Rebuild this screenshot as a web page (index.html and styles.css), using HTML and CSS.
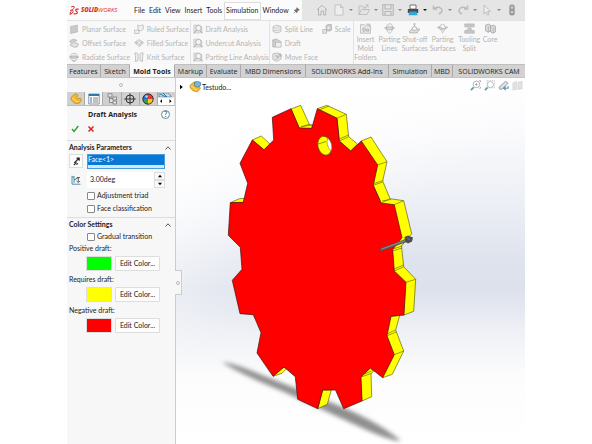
FILE: index.html
```html
<!DOCTYPE html>
<html lang="en">
<head>
<meta charset="utf-8">
<title>SOLIDWORKS - Draft Analysis</title>
<link rel="stylesheet" href="styles.css">
</head>
<body>
<svg class="defs" aria-hidden="true">
  <symbol id="i-cube" viewBox="0 0 10 10"><path d="M1.500 2.500 8.500 1V8L1.500 9.500Z" fill="#c9c9c9" stroke="#aaa" stroke-width=".5"/></symbol>
  <symbol id="i-offset" viewBox="0 0 10 10"><path d="M.5 3.500Q4-.5 8 2.500L6 3.500Q4 2.500 2.500 5Z" fill="#d0d0d0" stroke="#aaa" stroke-width=".6"/><path d="M1 7Q4 3 9.500 6L8 9Q4 10 1 7Z" fill="#e2e2e2" stroke="#aaa" stroke-width=".7"/></symbol>
  <symbol id="i-radiate" viewBox="0 0 10 10"><circle cx="5" cy="5" r="3.700" fill="#f2f2f2" stroke="#b5b5b5" stroke-width=".7"/><path d="M.3 5Q5 2.500 9.700 5Q5 8 .3 5ZM3 8.500 5 9.700 7 8.500" fill="#cfcfcf" stroke="#aaa" stroke-width=".6"/></symbol>
  <symbol id="i-ruled" viewBox="0 0 10 10"><path d="M3.500 1Q6 3 9 .8L9.500 5Q7 8 4.500 6.500ZM.5 6H5V9.500H.5Z" fill="#f0f0f0" stroke="#b5b5b5" stroke-width=".7"/></symbol>
  <symbol id="i-filled" viewBox="0 0 10 10"><path d="M.5 4.500 5 1.500 9.500 4.500 5.500 8.800Z" fill="#c8c8c8" stroke="#bbb" stroke-width=".6"/><path d="M3 3 7.500 6.500M7 3 3 6.700M5 2V8" stroke="#f5f5f5" stroke-width=".7"/></symbol>
  <symbol id="i-knit" viewBox="0 0 10 10"><path d="M.8 1Q3 .2 4 2V8.500L1.500 9.500V4ZM9.200 1Q7 .2 6 2V8.500L8.500 9.500V4Z" fill="#f0f0f0" stroke="#b0b0b0" stroke-width=".7"/></symbol>
  <symbol id="i-analysis" viewBox="0 0 10 10"><path d="M.8 1H6L9 3V9H.8Z" fill="#e2e2e2" stroke="#c2c2c2" stroke-width=".6"/><circle cx="5.500" cy="4" r="2.700" fill="#f5f5f5" stroke="#a9a9a9" stroke-width=".8"/><path d="M3.500 6 .8 9.300M7 7 9.500 9" stroke="#a9a9a9"/></symbol>
  <symbol id="i-split" viewBox="0 0 10 10"><path d="M1 2.500Q5-.5 9 2.500V7.500Q5 10.500 1 7.500Z" fill="#ededed" stroke="#b5b5b5" stroke-width=".7"/><path d="M1 3Q4 5.500 5 4T9 3M1 6Q5 8 9 5" fill="none" stroke="#b5b5b5" stroke-width=".6"/></symbol>
  <symbol id="i-draft" viewBox="0 0 10 10"><path d="M.7 2 4 .8 9 3.500V9H.7Z" fill="#cfcfcf" stroke="#aaa" stroke-width=".6"/><path d="M3.500 4.500H9V9H3.500Z" fill="#eee" stroke="#b5b5b5" stroke-width=".5"/><path d="M.7 2 3.500 4.500V9" fill="none" stroke="#aaa" stroke-width=".5"/></symbol>
  <symbol id="i-move" viewBox="0 0 10 10"><path d="M.8 2 5 1 9 2V7L5 9.300.8 7.500Z" fill="#e4e4e4" stroke="#b0b0b0" stroke-width=".7"/><path d="M3 4H6V6.500M3.500 7.500 8.500 3M6.500 2.700H9V5" fill="none" stroke="#a8a8a8" stroke-width=".8"/></symbol>
  <symbol id="i-scale" viewBox="0 0 10 10"><path d="M4 1.500 6 .5H9.500V6L8 7H4Z" fill="#c9c9c9" stroke="#aaa" stroke-width=".6"/><path d="M.7 5.500H4.500V9.300H.7Z" fill="#e3e3e3" stroke="#aaa" stroke-width=".6"/><circle cx="6.500" cy="3.700" r="1.300" fill="#eee"/></symbol>
  <symbol id="i-folder" viewBox="0 0 10 10"><path d="M.5 1.500H4L5 2.700H9.500V9.300H.5Z" fill="#ececec" stroke="#b5b5b5" stroke-width=".7"/><path d="M5.500 1H9V3.500M2.500 5 4 4 5 5V7L3.500 8 2.500 7ZM6 5.500H8V7.500H6Z" fill="#d4d4d4" stroke="#aaa" stroke-width=".6"/></symbol>
  <symbol id="i-parting" viewBox="0 0 10 10"><path d="M2 4Q2.500 1 5 .7T8 4ZM2.200 5.500Q3 8.500 5 9.500 7.500 8 8 5.500Z" fill="#f2f2f2" stroke="#b5b5b5" stroke-width=".7"/><path d="M.5 4.500 5 3.500 9.500 4.500 5 6.500Z" fill="#ddd" stroke="#aaa" stroke-width=".7"/></symbol>
  <symbol id="i-shut" viewBox="0 0 10 10"><path d="M.3 7.500 3 5.500H9.700L7.500 9H.7Z" fill="#e0e0e0" stroke="#aaa" stroke-width=".7"/><path d="M2.500 6Q3 3 5 3T7.500 6Q5 8 2.500 6Z" fill="#eee" stroke="#aaa" stroke-width=".7"/><path d="M5 .3V3M4 1.200 5 .3 6 1.200" fill="none" stroke="#aaa" stroke-width=".7"/></symbol>
  <symbol id="i-psurf" viewBox="0 0 10 10"><path d="M.3 4 5 2.500 9.700 4 5 7Z" fill="#c9c9c9" stroke="#aaa" stroke-width=".6"/><path d="M2.500 3.500Q3 1 5 1T7.500 3.500 5 5ZM4 6.500 5 9.300 7 6" fill="#f2f2f2" stroke="#b5b5b5" stroke-width=".6"/></symbol>
  <symbol id="i-tooling" viewBox="0 0 10 10"><path d="M.7.8H9.300V3.500H7.500Q5 4.500 2.500 3.500H.7ZM.7 9.300H9.300V6.800H7.500L6.500 5H3.500L2.500 6.800H.7Z" fill="#c5c5c5" stroke="#b3b3b3" stroke-width=".6"/></symbol>
  <symbol id="i-core" viewBox="0 0 10 10"><path d="M.5 2 3 1 5 2V7L3 8.500.5 7ZM5 3 7.500 2 9.500 3V8L7.500 9.300 5 8Z" fill="#ddd" stroke="#a9a9a9" stroke-width=".8"/><path d="M3 3V8M7.500 4V9" stroke="#aaa" stroke-width=".7"/></symbol>
  <symbol id="i-part" viewBox="0 0 12 12"><path d="M1 4.500 4 1.500 6.500 .8 8 2.500 6.500 4.500 7.500 6 10.500 5 11.300 7.500 8.500 10.800 4 9.800 1.300 7Z" fill="#f4b92d" stroke="#b98213" stroke-width=".7"/><path d="M2 5 4.500 6.500 6 8.500 8.500 8.800" fill="none" stroke="#ffe18a" stroke-width=".9"/></symbol>
</svg>

<main class="app">
  <header class="titlebar">
    <div class="brand">
      <svg class="brand-mark" viewBox="0 0 10 11"><g fill="none" stroke="#dd2b2b" stroke-linecap="round" stroke-linejoin="round"><path d="M2.500 1.800Q6.500.5 5 3.200 4 4.500 2.800 5" stroke-width="1"/><path d="M1.500 5.200Q4.500 4.500 4.300 6.300 3.700 8.700.8 9.300L2 6.500" stroke-width="1"/><path d="M9.300 4.200Q6.300 4 6.700 5.300L8.300 7.200Q8.500 9 5 8.800" stroke-width="1.200"/></g></svg>
      <span class="brand-name"><b>SOLID</b>WORKS</span>
    </div>
    <nav class="menus">
      <button>File</button><button>Edit</button><button>View</button><button>Insert</button><button>Tools</button><button class="boxed">Simulation</button><button>Window</button>
      <button class="pin" aria-label="Pin"><svg viewBox="0 0 8 8"><path d="M4.500.8 7.200 3.500 6 3.800 4.700 5.300 4.500 6.500 1.500 3.500 2.800 3.300 4.300 1.900ZM3 5 1 7.200" fill="#777" stroke="#555" stroke-width=".7"/></svg></button>
    </nav>
    <div class="quick">
      <button aria-label="Home"><svg viewBox="0 0 12 12"><path d="M1 6 6 1.200 11 6M2.500 5V11H5V7H7.500V11H9.700V5" fill="none" stroke="#b5b5b5"/></svg></button>
      <button class="drop" aria-label="New"><svg viewBox="0 0 12 12"><path d="M2 .8H7.500L10 3.500V11.200H2ZM7.500.8V3.500H10" fill="#eee" stroke="#bbb" stroke-width=".8"/></svg></button>
      <button class="drop" aria-label="Open"><svg viewBox="0 0 12 12"><path d="M1 10.500V2H4.500L5.500 3.500H8M1 10.500 3.500 5.500H11.500L9 10.500ZM6 5 10 1M7.500 1H10V3.500" fill="#e4e4e4" stroke="#bbb" stroke-width=".9"/></svg></button>
      <button class="drop" aria-label="Save"><svg viewBox="0 0 12 12"><path d="M.8.8H11.200V11.200H.8ZM3 1V5H9V1M3 11V7.500H9V11" fill="none" stroke="#b5b5b5" stroke-width="1.100"/></svg></button>
      <button class="drop live" aria-label="Print"><svg viewBox="0 0 12 12"><path d="M3 1H9V5H3Z" fill="#fff" stroke="#555" stroke-width=".8"/><path d="M.8 5H11.200V9H.8Z" fill="#474b50"/><path d="M2.500 7.500H9.500L10.500 11.200H1.500Z" fill="#35a6d8"/></svg></button>
      <button class="drop" aria-label="Undo"><svg viewBox="0 0 12 12"><path d="M1.500 1.500V5H5M2 4.700Q6 2 9 4.500T7 10" fill="none" stroke="#bbb" stroke-width="1.500"/></svg></button>
      <button class="drop" aria-label="Redo"><svg viewBox="0 0 12 12"><path d="M10.500 1.500V5H7M10 4.700Q6 2 3 4.500T5 10" fill="none" stroke="#bbb" stroke-width="1.500"/></svg></button>
      <button class="drop" aria-label="Select"><svg viewBox="0 0 12 12"><path d="M3 1 9.500 7.500H6.700L8 10.500 6.700 11.200 5.200 8 3 10Z" fill="#eee" stroke="#b5b5b5" stroke-width=".8"/></svg></button>
      <button aria-label="Rebuild"><svg viewBox="0 0 12 12"><rect x="3.300" y=".5" width="5.400" height="11" rx="2.500" fill="#999"/><circle cx="6" cy="3.500" r="1.300" fill="#ccc"/><circle cx="6" cy="8" r="1.300" fill="#ccc"/></svg></button>
    </div>
  </header>

  <section class="ribbon" aria-label="Mold tools commands">
    <div class="group three">
      <button><svg><use href="#i-cube"/></svg>Planar Surface</button>
      <button><svg><use href="#i-offset"/></svg>Offset Surface</button>
      <button><svg><use href="#i-radiate"/></svg>Radiate Surface</button>
    </div>
    <div class="group three">
      <button><svg><use href="#i-ruled"/></svg>Ruled Surface</button>
      <button><svg><use href="#i-filled"/></svg>Filled Surface</button>
      <button><svg><use href="#i-knit"/></svg>Knit Surface</button>
    </div>
    <div class="group three ruled">
      <button><svg><use href="#i-analysis"/></svg>Draft Analysis</button>
      <button><svg><use href="#i-analysis"/></svg>Undercut Analysis</button>
      <button><svg><use href="#i-analysis"/></svg>Parting Line Analysis</button>
    </div>
    <div class="group three ruled">
      <button><svg><use href="#i-split"/></svg>Split Line</button>
      <button><svg><use href="#i-draft"/></svg>Draft</button>
      <button><svg><use href="#i-move"/></svg>Move Face</button>
    </div>
    <div class="group three">
      <button><svg><use href="#i-scale"/></svg>Scale</button>
    </div>
    <div class="group large ruled">
      <button><svg><use href="#i-folder"/></svg>Insert<br>Mold<br>Folders</button>
      <button><svg><use href="#i-parting"/></svg>Parting<br>Lines</button>
      <button><svg><use href="#i-shut"/></svg>Shut-off<br>Surfaces</button>
      <button><svg><use href="#i-psurf"/></svg>Parting<br>Surfaces</button>
      <button><svg><use href="#i-tooling"/></svg>Tooling<br>Split</button>
      <button><svg><use href="#i-core"/></svg>Core</button>
    </div>
  </section>

  <nav class="tabs">
    <button>Features</button><button>Sketch</button><button class="current">Mold Tools</button><button>Markup</button><button>Evaluate</button><button>MBD Dimensions</button><button>SOLIDWORKS Add-Ins</button><button>Simulation</button><button>MBD</button><button class="last">SOLIDWORKS CAM</button>
  </nav>

  <div class="workspace">
    <aside class="panel">
      <div class="grip"><i></i></div>
      <div class="panel-tabs">
        <button aria-label="Feature tree"><svg><use href="#i-part"/></svg></button>
        <button class="current" aria-label="Properties"><svg viewBox="0 0 12 12"><path d="M.8 1H11.200V11H.8Z" fill="#fff" stroke="#5d6b78" stroke-width=".7"/><path d="M.8 1H11.200V3H.8Z" fill="#2d78ac"/><path d="M2 5H4M2 7H4M2 9H4" stroke="#2d78ac"/><path d="M5 5H10M5 7H10M5 9H10" stroke="#777" stroke-width=".9"/></svg></button>
        <button aria-label="Configurations"><svg viewBox="0 0 12 12"><path d="M2 .8H6V4H2ZM7 4H10.500V7H7ZM7 8H10.500V11H7ZM3.500 4V9.500H7M3.500 5.500H7" fill="#e5e5e5" stroke="#777" stroke-width=".8"/></svg></button>
        <button aria-label="Dimensions"><svg viewBox="0 0 12 12"><circle cx="6" cy="6" r="4" fill="none" stroke="#333"/><path d="M6 .3V11.700M.3 6H11.700" stroke="#333"/></svg></button>
        <button aria-label="Appearance"><svg viewBox="0 0 12 12"><circle cx="6" cy="6" r="5.300" fill="#2868cc"/><path d="M6 6V.7A5.300 5.300 0 0 1 11.300 6Z" fill="#e13c2f"/><path d="M6 6H11.300A5.300 5.300 0 0 1 6 11.300Z" fill="#f3c927"/><path d="M6 6V11.300A5.300 5.300 0 0 1 .7 6Z" fill="#36a046"/><circle cx="6" cy="6" r="5.200" fill="none" stroke="#222" stroke-width=".8"/><circle cx="4.500" cy="3.500" r="1.300" fill="#fff" opacity=".7"/></svg></button>
        <button class="scroller" aria-label="More tabs"><svg viewBox="0 0 16 12"><path d="M1 0H10L13 3V4H1Z" fill="#c9dce8" stroke="#54738a" stroke-width=".7"/><path d="M2 1 8 4M5 0 9 4" stroke="#287dad"/><path d="M0 4.500H16V12H0Z" fill="#fff"/><path d="M4 6.300V10L2 8.200ZM11.500 6.300V10L13.500 8.200Z" fill="#000"/></svg></button>
      </div>
      <div class="heading">
        <h1>Draft Analysis</h1>
        <button class="help" aria-label="Help">?</button>
      </div>
      <div class="confirm">
        <button aria-label="OK"><svg viewBox="0 0 8 8"><path d="M1 4 3 6.500 7.300 1" fill="none" stroke="#2c9c2c" stroke-width="1.300"/></svg></button>
        <button aria-label="Cancel"><svg viewBox="0 0 8 8"><path d="M1.500 1.500 6.500 6.500M6.500 1.500 1.500 6.500" fill="none" stroke="#e02020" stroke-width="1.500"/></svg></button>
      </div>

      <section class="block">
        <h2>Analysis Parameters<svg viewBox="0 0 6 6"><path d="M.5 4.500 3 1.800 5.500 4.500" fill="none" stroke="#444" stroke-width=".9"/></svg></h2>
        <div class="param">
          <button class="reverse" aria-label="Reverse direction"><svg viewBox="0 0 10 10"><path d="M2.500 6.500 7.500 1.700M5 1.300H8V4.300M2 9 5 6M5 8.500 6.500 7" fill="none" stroke="#222" stroke-width="1.300"/></svg></button>
          <div class="selection"><span class="picked">Face&lt;1&gt;</span></div>
        </div>
        <div class="param">
          <svg class="angle-icon" viewBox="0 0 10 10"><path d="M1 .8V9.200H9.500M3 1V8M1 2H3" fill="none" stroke="#3e86b0" stroke-width=".9"/><path d="M3 5 7.500 2.500M7.300 2V7M5.500 6 7.300 7.500 9 6M5.800 2.500H9" fill="none" stroke="#444" stroke-width=".8"/></svg>
          <div class="spin">
            <input type="text" value="3.00deg" aria-label="Draft angle">
            <div class="steps">
              <button aria-label="Increase"><svg viewBox="0 0 6 4"><path d="M1 3.200 3 .8 5 3.200Z"/></svg></button>
              <button aria-label="Decrease"><svg viewBox="0 0 6 4"><path d="M1 .8 3 3.200 5 .8Z"/></svg></button>
            </div>
          </div>
        </div>
        <label class="check"><input type="checkbox">Adjustment triad</label>
        <label class="check"><input type="checkbox">Face classification</label>
      </section>

      <section class="block colors">
        <h2>Color Settings<svg viewBox="0 0 6 6"><path d="M.5 4.500 3 1.800 5.500 4.500" fill="none" stroke="#444" stroke-width=".9"/></svg></h2>
        <label class="check"><input type="checkbox">Gradual transition</label>
        <p>Positive draft:</p>
        <div class="color"><span class="swatch positive"></span><button>Edit Color...</button></div>
        <p>Requires draft:</p>
        <div class="color"><span class="swatch requires"></span><button>Edit Color...</button></div>
        <p>Negative draft:</p>
        <div class="color"><span class="swatch negative"></span><button>Edit Color...</button></div>
      </section>
      <button class="handle" aria-label="Collapse panel"><i></i></button>
    </aside>

    <section class="viewport" aria-label="Model view">
      <svg class="model" viewBox="176 78 349 366" preserveAspectRatio="xMidYMin slice" role="img" aria-label="Part with draft analysis colours">
        <defs>
          <linearGradient id="sky" gradientUnits="userSpaceOnUse" x1="0" y1="77" x2="0" y2="444">
            <stop offset="0" stop-color="#fff"/><stop offset=".14" stop-color="#fbfbfd"/><stop offset=".34" stop-color="#eceff5"/><stop offset=".5" stop-color="#dfe3ed"/><stop offset=".58" stop-color="#dde1ec"/><stop offset=".69" stop-color="#eef0f5"/><stop offset=".81" stop-color="#fcfcfd"/><stop offset="1" stop-color="#fff"/>
          </linearGradient>
          <linearGradient id="glow" gradientUnits="userSpaceOnUse" x1="200" y1="160" x2="290" y2="290">
            <stop offset="0" stop-color="#fff" stop-opacity=".95"/><stop offset="1" stop-color="#fff" stop-opacity="0"/>
          </linearGradient>
          <filter id="soft" x="-20%" y="-20%" width="140%" height="140%"><feGaussianBlur stdDeviation="1.900"/></filter>
        </defs>
        <rect x="176" y="77" width="349" height="367" fill="url(#sky)"/>
        <rect x="176" y="77" width="349" height="367" fill="url(#glow)"/>
        <path d="M222 362Q234 363 262 375L330 402Q378 421 401 441Q390 441 360 427L282 391Q238 373 222 362Z" fill="#8f8f8f" filter="url(#soft)"/>
        <g fill="#ff0" stroke="#4b4b10" stroke-width=".6" stroke-linejoin="round">
          <path d="M291 109 300.700 105.300 309.500 124.700 312.500 125 311.700 128.500H299.300Z"/>
          <path d="M317.300 108.700 326.700 105.300 346.300 114.300 348.700 136.700 357.500 144 350.700 151 339.300 141 337 118.300Z"/>
          <path d="M361.300 141 371 137 387 161.700 382.700 181 390 198.700 403.700 200.700 411.700 233.700 401.500 246 403.700 266.700 415.700 279.300 413.700 311.300 404 315 380 310V200L373 185Z"/>
          <path d="M391 316.300 399.700 315.300 395.700 330 403.700 351 392.300 374.300 382.700 377.700 380 340Z"/>
          <path d="M370.300 368 373.500 371 371 374 371.700 396.700 362 401 360 377Z"/>
          <path d="M322.700 390H331.300L327.300 404.300 317.700 408.700Z"/>
          <path d="M273 376.300 284 367 286 369.300 282 373.300Z"/>
          <path d="M252.300 140 261.300 136 270 144 264 150Z"/>
          <path d="M230.300 202.700 239.300 198.700 244.500 198.300 243.300 203Z"/>
        </g>
        <path d="M272.300 117.300 291 108.700 299.300 128 311.700 128.300 317.300 108.700 337 118.300 339.300 141 350.700 151 361.300 141 377.700 165 373.300 185.300 381 203 394.300 204.700 402 237.700 392.700 249.500 394.300 271 406 282.300 404 315 391 316.300 387 335.700 394.300 354.700 382.700 377.700 370.300 368 361 377 362 401 343.700 408.700 335.500 390H322.700L317.700 408.700 297.700 399.300 295.300 376.700 284 367 273 376.300 257 353 261 332.700 253.300 314.700 240 313.700 232.300 280.300 242 269.300 240.300 247.300 228.300 235.300 230.300 202.700 243.300 202.300 247.700 183.300 240 163.300 252.300 140 264 149.700 273.700 140Z" fill="#f00" stroke="#4a1010" stroke-width=".7" stroke-linejoin="round"/>
        <path d="M299.300 128 309.500 124M301 126.500 312 125M337 118.300 346.300 114.300M339.300 141 348.700 136.700M339.300 139 348.500 135M320 109.500 329 106M377.700 165 387 161.700M373.300 185.300 382.700 182M374 183.500 383 180.500M381 203 390 198.700M382 201 391 199.500M394.300 204.700 403.700 200.700M392.700 251 402 248M393 249 402 246M394.300 271 403.700 266.700M394 269 403.500 265M406 282.300 415.700 279.300M387 335.700 396.500 332M388 333.500 395.700 330M394.300 354.700 403.700 351M361 377 371 373.500M362 375 371.500 371" stroke="#5b5b12" stroke-width=".6" fill="none"/>
        <g transform="rotate(-14 324.700 145.700)">
          <ellipse cx="324.700" cy="145.700" rx="6.800" ry="9.700" fill="#ff0" stroke="#4b4b10" stroke-width=".7"/>
          <path d="M329.500 138.900Q333.800 146 329.500 152.500 325.500 145 329.500 138.900Z" fill="#fff" stroke="#77772a" stroke-width=".5"/>
          <path d="M318 142.500 327 142" stroke="#5b5b12" stroke-width=".6"/>
        </g>
        <path d="M381.500 249.500 406 240.500" stroke="#555" stroke-width="3.200" stroke-linecap="round"/>
        <path d="M382 249 405 240.700" stroke="#8a8a8a" stroke-width="1.300" stroke-linecap="round"/>
        <path d="M404.500 237 408 235.500 413 237.500 412 241.500 408 243.500 405 241.500Z" fill="#4c4c4c"/>
        <path d="M407 237.500 410 240" stroke="#888" stroke-width=".8"/>
      </svg>
      <div class="tree">
        <button class="arrow" aria-label="Expand tree"><svg viewBox="0 0 6 6"><path d="M2 .8 4.800 3 2 5.200Z"/></svg></button>
        <svg class="part" viewBox="0 0 12 12"><use href="#i-part"/><path d="M5.500 1.500 8.500.3 11.500 1.500V4.500L8.500 6.200 5.500 4.700Z" fill="#70b9df" stroke="#2b7196" stroke-width=".6"/></svg>
        <span>Testudo...</span>
      </div>
      <div class="view-tools">
        <button aria-label="Zoom to fit"><svg viewBox="0 0 12 12"><path d="M1 11 4 8" stroke="#5b9cc0" stroke-width="2"/><circle cx="7" cy="4.800" r="3.600" fill="#fff" stroke="#aaa"/><path d="M5.500 4.800H8.500M7 3.300V6.300M10 .8H11.500V2.300M10 9H11.500V7.500" fill="none" stroke="#888" stroke-width=".7"/></svg></button>
        <button aria-label="Zoom to area"><svg viewBox="0 0 12 12"><path d="M1 11 4 8" stroke="#5b9cc0" stroke-width="2"/><circle cx="7" cy="5" r="3.300" fill="#fff" stroke="#bbb"/><path d="M3.500.8H11.300V8.500H3.500Z" fill="none" stroke="#aaa" stroke-width=".7" stroke-dasharray="1.500 1"/></svg></button>
        <button aria-label="Previous view"><svg viewBox="0 0 12 12"><path d="M1 8 8 1.500 11 3.500 4.500 10Q1 11 1 8Z" fill="#ddd" stroke="#888" stroke-width=".8"/><path d="M11 6.500V9H7M8.500 7 6 9 8.500 11" fill="none" stroke="#5b9cc0" stroke-width="1.300"/></svg></button>
        <button aria-label="Section view"><svg viewBox="0 0 12 12"><path d="M1 3 5 1.500V10L1 11.200ZM6.500 2.500 11 1.500V9.500L6.500 10.500Z" fill="#e2e2e2" stroke="#d5d5d5" stroke-width=".8"/></svg></button>
      </div>
    </section>
  </div>
</main>
</body>
</html>
```

FILE: styles.css
```css
* {
  box-sizing: border-box;
}

body {
  margin: 0;
  padding: 0 67px;
  background: #fff;
  color: #222;
  font: 7px/9px Lato, "Open Sans", sans-serif;
}

button {
  margin: 0;
  padding: 0;
  border: 0;
  background: none;
  color: inherit;
  font: inherit;
}

h1,
h2,
p {
  margin: 0;
  font-size: 7px;
}

svg {
  display: block;
  flex: none;
}

.defs {
  display: none;
}

.app {
  display: flex;
  flex-direction: column;
  min-height: 100vh;
}

/* Title bar */

.titlebar {
  display: flex;
  height: 21px;
  background: #fbfbfb;
  border-bottom: 1px solid #e2e2e2;
}

.brand {
  display: flex;
  align-items: center;
  gap: 2px;
  padding-left: 2px;
  width: 65px;
  color: #dd2b2b;
}

.brand-mark {
  width: 10px;
  height: 11px;
}

.brand-name {
  font-family: "Open Sans", sans-serif;
  font-size: 6px;
  font-style: italic;
}

.brand-name b {
  font-weight: 800;
}

.menus {
  display: flex;
  flex: none;
  align-items: center;
  gap: 4px;
  padding: 1px 4px 0 2px;
  width: 170px;
}

.menus .boxed {
  height: 18px;
  margin: 0 -2px;
  padding: 0 1px;
  border: 1px solid #ddd;
  background: #fff;
}

.pin {
  margin-left: auto;
}

.pin svg {
  width: 7px;
  height: 7px;
}

.quick {
  display: flex;
  flex: 1;
  align-items: center;
  justify-content: space-between;
  padding: 0 7px 0 14px;
  background: #e5e5e5;
}

.quick button {
  display: flex;
  align-items: center;
  gap: 4px;
}

.quick svg {
  width: 12px;
  height: 12px;
}

.drop::after {
  content: "";
  border: 2px solid transparent;
  border-top-color: #888;
  border-bottom: 0;
}

.live::after {
  border-top-color: #111;
}

/* Command ribbon */

.ribbon {
  display: grid;
  grid-template-columns: 65fr 58fr 78fr 51fr 33fr 173fr;
  height: 43px;
  background: #f8f8f8;
  color: #b4b4b4;
}

.group {
  padding: 1px 0 0 2px;
}

.ruled {
  border-left: 1px solid #e2e2e2;
}

.three button {
  display: flex;
  align-items: center;
  gap: 3px;
  height: 14px;
  white-space: nowrap;
}

.ribbon svg {
  width: 10px;
  height: 10px;
}

.large {
  display: grid;
  grid-template-columns: 24fr 24fr 27fr 29fr 24fr 18fr 26fr;
  align-items: start;
  padding: 2px 0 0;
}

.large button {
  display: block;
}

.large svg {
  width: 11px;
  height: 11px;
  margin: 0 auto 1px;
}

/* Command tabs */

.tabs {
  display: grid;
  grid-template-columns: 34fr 29fr 45fr 32fr 34fr 65fr 83fr 43fr 21fr 72fr;
  height: 14px;
  border-bottom: 1px solid #c4c4c4;
  background: #d2d2d2;
  font-family: "Open Sans", sans-serif;
}

.tabs button {
  border-top: 1px solid #c0c0c0;
  border-right: 1px solid #aaa;
  white-space: nowrap;
}

.tabs .current {
  border-top-color: #fafafa;
  background: #fafafa;
  font-weight: 700;
}

.tabs .last {
  border-right: 0;
}

/* Property panel */

.workspace {
  display: flex;
  flex: 1;
}

.panel {
  position: relative;
  flex: none;
  width: 109px;
  border-right: 1px solid #ccc;
  background: #f7f7f7;
}

.grip {
  display: flex;
  align-items: center;
  justify-content: center;
  height: 14px;
}

.grip i,
.handle i {
  width: 4px;
  height: 4px;
  border: 1px solid #bbb;
  border-radius: 50%;
}

.panel-tabs {
  display: grid;
  grid-template-columns: repeat(5, 18fr) 17fr;
  height: 14px;
  border-bottom: 1px solid #bbb;
  background: #d0d0d0;
}

.panel-tabs button {
  display: flex;
  align-items: center;
  justify-content: center;
  border-right: 1px solid #aaa;
}

.panel-tabs .current {
  background: #f7f7f7;
}

.panel-tabs .scroller {
  border: 0;
}

.panel-tabs svg {
  width: 12px;
  height: 12px;
}

.panel-tabs .scroller svg {
  width: 16px;
}

.heading {
  display: flex;
  align-items: center;
  justify-content: space-between;
  height: 17px;
  padding: 0 5px 0 21px;
}

.heading h1 {
  font-family: "Open Sans", sans-serif;
  font-weight: 700;
}

.help {
  width: 9px;
  height: 9px;
  border: 1px solid #68869a;
  border-radius: 50%;
  background: #fff;
  color: #2477aa;
  font-weight: 700;
  line-height: 7px;
}

.confirm {
  display: flex;
  align-items: flex-start;
  gap: 8px;
  height: 17px;
  padding: 2px 4px 0;
}

.confirm svg {
  width: 8px;
  height: 8px;
}

.block {
  height: 77px;
  padding: 1px 2px 0;
  border-top: 1px solid #ddd;
}

.colors {
  height: auto;
}

.block h2 {
  display: flex;
  align-items: center;
  justify-content: space-between;
  height: 11px;
  padding-right: 2px;
  font-weight: 700;
}

.block h2 svg {
  width: 6px;
  height: 6px;
}

.param {
  display: flex;
  align-items: flex-start;
  gap: 4px;
  height: 18px;
  padding: 1px 8px 0 0;
}

.reverse {
  display: grid;
  place-items: center;
  width: 14px;
  height: 14px;
  border: 1px solid #ddd;
  background: #fcfcfc;
}

.reverse svg {
  width: 9px;
  height: 9px;
}

.selection {
  flex: 1;
  height: 15px;
  border: 1px solid #4a9ddb;
  background: #cfe8fb;
}

.picked {
  display: block;
  height: 10px;
  background: #0878d7;
  color: #fff;
}

.angle-icon {
  width: 10px;
  height: 10px;
  margin: 3px 2px 0;
}

.spin {
  display: flex;
  flex: 1;
  min-width: 0;
  height: 16px;
  background: #fff;
}

.spin input {
  flex: 1;
  width: 0;
  min-width: 0;
  padding: 0 3px 2px;
  border: 0;
  background: none;
  color: inherit;
  font: inherit;
}

.steps {
  display: grid;
  flex: none;
  width: 11px;
}

.steps button {
  display: grid;
  place-items: center;
  border: 1px solid #ddd;
  background: #fafafa;
}

.steps svg {
  width: 6px;
  height: 4px;
}

.check {
  display: flex;
  align-items: center;
  gap: 2px;
  height: 13px;
  padding-left: 18px;
}

.check input {
  appearance: none;
  width: 8px;
  height: 8px;
  margin: 0;
  border: 1px solid #888;
  border-radius: 1px;
  background: #fff;
}

.colors p {
  height: 12px;
  line-height: 11px;
}

.color {
  display: flex;
  gap: 3px;
  height: 19px;
  padding: 1px 0 3px 17px;
}

.swatch {
  width: 26px;
  border: 1px solid #ddd;
}

.positive {
  background: #0f0;
}

.requires {
  background: #ff0;
}

.negative {
  background: #f00;
}

.color button {
  width: 45px;
  border: 1px solid #ddd;
  border-radius: 1px;
  background: #fdfdfd;
}

.handle {
  position: absolute;
  z-index: 1;
  top: 192px;
  right: -7px;
  display: grid;
  place-items: center;
  width: 7px;
  height: 25px;
  border: 1px solid #ccc;
  border-left: 0;
  background: #f7f7f7;
}

/* Model view */

.viewport {
  position: relative;
  flex: 1;
  min-width: 0;
  overflow: hidden;
}

.model {
  width: 100%;
  height: 100%;
}

.tree {
  position: absolute;
  top: 3px;
  left: 2px;
  display: flex;
  align-items: center;
}

.arrow svg {
  width: 6px;
  height: 6px;
}

.part {
  width: 12px;
  height: 12px;
  margin: 0 1px 0 5px;
}

.view-tools {
  position: absolute;
  top: 2px;
  right: 2px;
  display: flex;
  gap: 3px;
}

.view-tools svg {
  width: 11px;
  height: 11px;
}
```
